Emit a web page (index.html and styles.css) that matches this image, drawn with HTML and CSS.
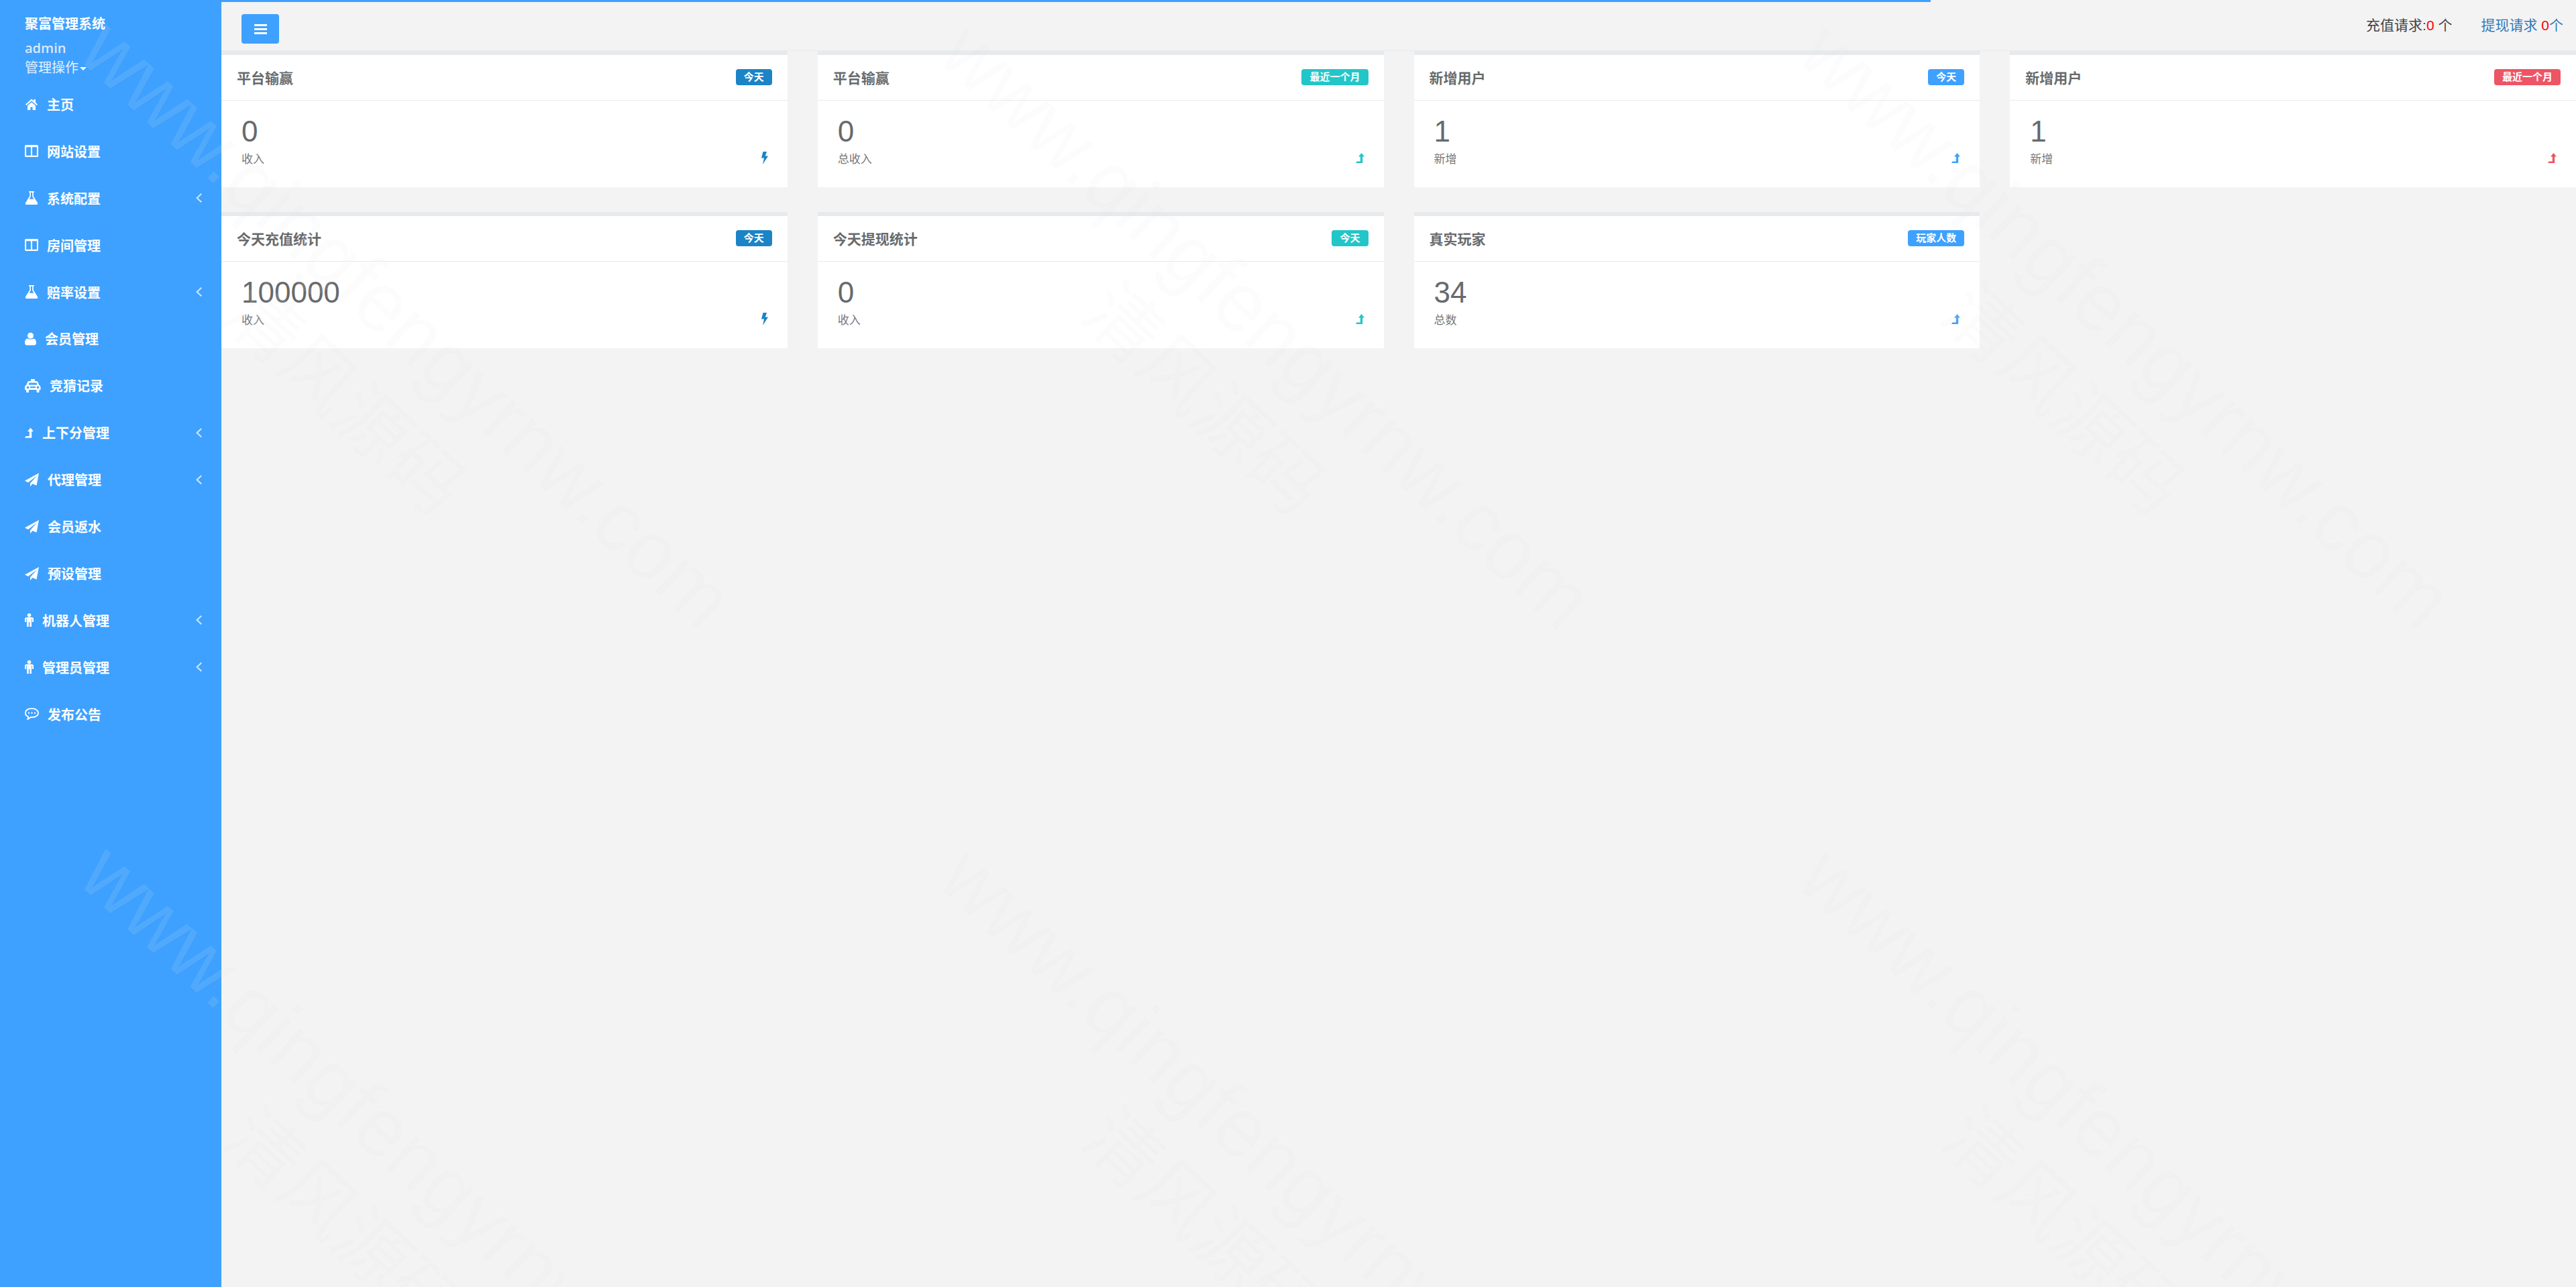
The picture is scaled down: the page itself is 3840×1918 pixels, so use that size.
FILE: index.html
```html
<!DOCTYPE html>
<html lang="zh-CN">
<head>
<meta charset="utf-8">
<title>聚富管理系统</title>
<link rel="stylesheet" href="styles.css">
</head>
<body>
<svg class="sprites" xmlns="http://www.w3.org/2000/svg">
  <symbol id="i-home" viewBox="0 0 20 18"><path d="M10 1.5 1 9.5l1.300 1.500L10 4.200 17.700 11 19 9.500 16 6.800V2h-2.700v2.400zM4 11.500 10 6.200l6 5.300V18h-4.400v-4.600H8.400V18H4z"/></symbol>
  <symbol id="i-columns" viewBox="0 0 19 17"><path fill-rule="evenodd" d="M1.500 0h16A1.500 1.500 0 0 1 19 1.500v14a1.500 1.500 0 0 1-1.500 1.500h-16A1.500 1.500 0 0 1 0 15.500v-14A1.500 1.500 0 0 1 1.500 0zM2 3v12h6.500V3zm8.500 0v12H17V3z"/></symbol>
  <symbol id="i-flask" viewBox="0 0 17 18"><path fill-rule="evenodd" d="M5 0h7v1.500h-1v5l5.600 9q.8 2-1.200 2.500H1.600Q-.4 17.500.4 15.500l5.600-9v-5H5zM7.500 1.500v5.500L5.500 10.500h6L9.500 7V1.500z"/></symbol>
  <symbol id="i-user" viewBox="0 0 16 18"><circle cx="8" cy="4.500" r="4.300"/><path d="M3.500 8.500Q8 11 12.500 8.500 16 9.500 16 14.500 16 18 13 18H3Q0 18 0 14.500 0 9.500 3.500 8.500z"/></symbol>
  <symbol id="i-taxi" viewBox="0 0 24 20"><path fill-rule="evenodd" d="M9 0h6v3h2.500q1.500 0 2 1.500l1.500 4q2.500 1 2.500 3.500v4h-2v2.500q0 1.500-1.500 1.500h-1q-1.500 0-1.500-1.500V16H6v2.500Q6 20 4.500 20h-1Q2 20 2 18.500V16H0v-4q0-2.500 2.500-3.500l1.500-4Q4.500 3 6 3h3zM6.500 5.500 5.500 8.500h13l-1-3zM4.500 10.500a1.800 1.800 0 1 0 .01 0zm15 0a1.800 1.800 0 1 0 .01 0zM8 11v2h8v-2z"/></symbol>
  <symbol id="i-level" viewBox="0 0 13 15"><path d="M8.500 0 13 5.500h-2.800V15H0l1.600-2.400h5.200V5.500H4z"/></symbol>
  <symbol id="i-plane" viewBox="0 0 21 20"><path d="M21 0 17.500 18.500 11.500 16 8 20v-4.800L18 4 5 14 0 11.500z"/></symbol>
  <symbol id="i-male" viewBox="0 0 13 20"><circle cx="6.500" cy="2.800" r="2.800"/><path d="M2.500 6h8Q13 6 13 8.500V13h-2.200v-5h-.8v12H7.200v-7H5.800v7H3V8h-.8v5H0V8.500Q0 6 2.500 6z"/></symbol>
  <symbol id="i-comment" viewBox="0 0 21 18"><path fill-rule="evenodd" d="M10.500 0C16.300 0 21 3.200 21 7.500S16.300 15 10.500 15h-1.600Q6.500 17.300 2.500 18 4 16.300 4.300 13.800 0 12 0 7.500 0 0 10.500 0zm0 1.700C5.500 1.700 1.800 4.200 1.800 7.500c0 2.500 2 4.200 4.400 5.200q0 1.400-.5 2.300 1.700-.8 2.700-2.200 1 .1 2.100.1c5 0 8.700-2.500 8.700-5.400s-3.700-5.800-8.700-5.800zM6 6.300a1.200 1.200 0 1 1-.01 0zm4.500 0a1.200 1.200 0 1 1-.01 0zm4.500 0a1.200 1.200 0 1 1-.01 0z"/></symbol>
  <symbol id="i-bolt" viewBox="0 0 11 19"><path d="M3.500 0H9L6.800 6.500H11L3 19l2-9.500H1z"/></symbol>
  <symbol id="i-angle" viewBox="0 0 9 14"><path d="M7.500 0 9 1.400 3.200 7 9 12.600 7.500 14 0 7z"/></symbol>
</svg>

<div class="page">
  <aside class="sidebar">
    <div class="profile">
      <div class="brand">聚富管理系统</div>
      <div class="account">admin</div>
      <div class="manage">管理操作<span class="caret"></span></div>
    </div>
    <nav class="nav">
      <a class="nav-item"><svg class="ni w19"><use href="#i-home"/></svg><span>主页</span></a>
      <a class="nav-item"><svg class="ni w19"><use href="#i-columns"/></svg><span>网站设置</span></a>
      <a class="nav-item"><svg class="ni w19"><use href="#i-flask"/></svg><span>系统配置</span><svg class="angle"><use href="#i-angle"/></svg></a>
      <a class="nav-item"><svg class="ni w19"><use href="#i-columns"/></svg><span>房间管理</span></a>
      <a class="nav-item"><svg class="ni w19"><use href="#i-flask"/></svg><span>赔率设置</span><svg class="angle"><use href="#i-angle"/></svg></a>
      <a class="nav-item"><svg class="ni w16"><use href="#i-user"/></svg><span>会员管理</span></a>
      <a class="nav-item"><svg class="ni w24"><use href="#i-taxi"/></svg><span>竞猜记录</span></a>
      <a class="nav-item"><svg class="ni w13"><use href="#i-level"/></svg><span>上下分管理</span><svg class="angle"><use href="#i-angle"/></svg></a>
      <a class="nav-item"><svg class="ni w21"><use href="#i-plane"/></svg><span>代理管理</span><svg class="angle"><use href="#i-angle"/></svg></a>
      <a class="nav-item"><svg class="ni w21"><use href="#i-plane"/></svg><span>会员返水</span></a>
      <a class="nav-item"><svg class="ni w21"><use href="#i-plane"/></svg><span>预设管理</span></a>
      <a class="nav-item"><svg class="ni w13"><use href="#i-male"/></svg><span>机器人管理</span><svg class="angle"><use href="#i-angle"/></svg></a>
      <a class="nav-item"><svg class="ni w13"><use href="#i-male"/></svg><span>管理员管理</span><svg class="angle"><use href="#i-angle"/></svg></a>
      <a class="nav-item"><svg class="ni w21"><use href="#i-comment"/></svg><span>发布公告</span></a>
    </nav>
  </aside>

  <main class="main">
    <div class="progress"></div>
    <header class="topbar">
      <button class="toggle" type="button"><span class="bars"><i></i><i></i><i></i></span></button>
      <div class="requests">
        <span class="req">充值请求:<b class="red">0</b> 个</span>
        <a class="req link">提现请求 <b class="red">0</b>个</a>
      </div>
    </header>

    <section class="grid">
      <article class="card">
        <div class="card-head"><h5>平台输赢</h5><span class="badge navy">今天</span></div>
        <div class="card-body"><div class="num">0</div><div class="foot"><small>收入</small><svg class="ci bolt c-navy"><use href="#i-bolt"/></svg></div></div>
      </article>
      <article class="card">
        <div class="card-head"><h5>平台输赢</h5><span class="badge teal">最近一个月</span></div>
        <div class="card-body"><div class="num">0</div><div class="foot"><small>总收入</small><svg class="ci c-teal"><use href="#i-level"/></svg></div></div>
      </article>
      <article class="card">
        <div class="card-head"><h5>新增用户</h5><span class="badge blue">今天</span></div>
        <div class="card-body"><div class="num">1</div><div class="foot"><small>新增</small><svg class="ci c-blue"><use href="#i-level"/></svg></div></div>
      </article>
      <article class="card">
        <div class="card-head"><h5>新增用户</h5><span class="badge red-bg">最近一个月</span></div>
        <div class="card-body"><div class="num">1</div><div class="foot"><small>新增</small><svg class="ci c-red"><use href="#i-level"/></svg></div></div>
      </article>
      <article class="card">
        <div class="card-head"><h5>今天充值统计</h5><span class="badge navy">今天</span></div>
        <div class="card-body"><div class="num">100000</div><div class="foot"><small>收入</small><svg class="ci bolt c-navy"><use href="#i-bolt"/></svg></div></div>
      </article>
      <article class="card">
        <div class="card-head"><h5>今天提现统计</h5><span class="badge teal">今天</span></div>
        <div class="card-body"><div class="num">0</div><div class="foot"><small>收入</small><svg class="ci c-teal"><use href="#i-level"/></svg></div></div>
      </article>
      <article class="card">
        <div class="card-head"><h5>真实玩家</h5><span class="badge blue">玩家人数</span></div>
        <div class="card-body"><div class="num">34</div><div class="foot"><small>总数</small><svg class="ci c-blue"><use href="#i-level"/></svg></div></div>
      </article>
    </section>
  </main>
</div>

<svg class="watermark" xmlns="http://www.w3.org/2000/svg" width="3840" height="1918" viewBox="0 0 3840 1918">
  <defs>
    <filter id="emboss" filterUnits="userSpaceOnUse" x="0" y="0" width="3840" height="1918" color-interpolation-filters="sRGB">
      <feOffset in="SourceAlpha" dx="0" dy="1.5" result="off"/>
      <feComposite in="off" in2="SourceAlpha" operator="out" result="edge"/>
      <feGaussianBlur in="edge" stdDeviation="0.4" result="soft"/>
      <feFlood flood-color="#000" flood-opacity="0.11"/>
      <feComposite in2="soft" operator="in" result="shade"/>
      <feMerge><feMergeNode in="SourceGraphic"/><feMergeNode in="shade"/></feMerge>
    </filter>
    <g id="wm-tile">
      <text class="wm-url" transform="rotate(42.6)" textLength="1265" lengthAdjust="spacingAndGlyphs">www.qingfengyrnw.com</text>
      <text class="wm-cn" transform="translate(214 386) rotate(43)">清风源码</text>
    </g>
  </defs>
  <g filter="url(#emboss)">
    <use href="#wm-tile" x="113" y="85"/>
    <use href="#wm-tile" x="1394" y="85"/>
    <use href="#wm-tile" x="2675" y="85"/>
    <use href="#wm-tile" x="113" y="1314"/>
    <use href="#wm-tile" x="1394" y="1314"/>
    <use href="#wm-tile" x="2675" y="1314"/>
  </g>
</svg>
</body>
</html>
```
FILE: styles.css
```css
* { box-sizing: border-box; }
html, body { margin: 0; padding: 0; height: 100%; overflow: hidden; }
body {
  position: relative;
  background: #f3f3f4;
  color: #676a6c;
  font-family: "Liberation Sans", "Noto Sans CJK SC", sans-serif;
  font-size: 20px;
}
.sprites { display: none; }
.page { display: flex; height: 1918px; }

/* sidebar */
.sidebar { flex: 0 0 330px; background: #3ea1ff; color: #fff; }
.profile { padding: 24px 0 5.5px 37px; }
.brand { font-size: 20px; line-height: 24px; font-weight: 700; color: #fff; }
.account { margin-top: 10px; font-family: "Open Sans", sans-serif; font-size: 20px; line-height: 28px; font-weight: 600; color: #dfe7f5; }
.manage { margin-top: 1px; font-size: 20px; line-height: 28px; color: #e4effc; }
.caret { display: inline-block; margin-left: 2px; vertical-align: middle; border-top: 5px solid #fff; border-left: 5px solid transparent; border-right: 5px solid transparent; }
.nav { display: flex; flex-direction: column; }
.nav-item { display: flex; align-items: center; height: 69.92px; padding-left: 37px; font-size: 20px; font-weight: 700; color: #fff; }
.ni { fill: #fff; height: 20px; margin-right: 13px; flex: none; }
.w13 { width: 13px; } .w16 { width: 17px; } .w19 { width: 20px; } .w21 { width: 21px; } .w24 { width: 24px; }
.angle { width: 9px; height: 14px; margin-left: auto; margin-right: 29px; fill: #c9e3ff; }

/* main */
.main { position: relative; flex: 1; min-width: 0; }
.progress { position: absolute; left: 0; top: 0; width: 72.6%; height: 3px; background: #3ea1ff; }
.topbar { display: flex; justify-content: space-between; align-items: flex-start; height: 76px; padding: 21px 19px 0 30px; border-bottom: 1px solid #e7eaec; }
.toggle { width: 56px; height: 44px; padding: 0; border: 0; border-radius: 4px; background: #3ea1ff; display: flex; align-items: center; justify-content: center; }
.bars { display: flex; flex-direction: column; gap: 3px; width: 19px; }
.bars i { display: block; height: 3px; background: #fff; }
.requests { display: flex; gap: 43px; margin-top: 2px; font-size: 21px; line-height: 30px; color: #444; }
.req b { font-weight: 400; }
.link { color: #337ab7; }
.red { color: #f00; }

.grid { display: grid; grid-template-columns: repeat(4, 1fr); column-gap: 45px; row-gap: 37px; }
.card { height: 203px; background: #fff; border-top: 6px solid #e7eaec; }
.card-head { display: flex; align-items: center; justify-content: space-between; height: 67.5px; padding: 0 23px; border-bottom: 1.5px solid #e7eaec; }
.card-head h5 { margin: -1px 0 0; font-size: 21px; font-weight: 700; color: #676a6c; }
.badge { display: block; height: 24px; padding: 0 12px; border-radius: 4px; color: #fff; font-size: 15px; line-height: 24px; font-weight: 700; }
.navy { background: #1c84c6; }
.teal { background: #23c6c8; }
.blue { background: #3ea1ff; }
.red-bg { background: #ed5565; }
.card-body { padding: 22px 29px 0 30px; }
.num { font-size: 44px; line-height: 47px; color: #676a6c; }
.foot { display: flex; align-items: center; justify-content: space-between; height: 33px; }
.foot small { font-size: 17px; color: #777; }
.ci { width: 13px; height: 15px; }
.bolt { width: 11px; height: 19px; }
.c-navy { fill: #1c84c6; } .c-teal { fill: #23c6c8; } .c-blue { fill: #3ea1ff; } .c-red { fill: #ed5565; }

/* watermark */
.watermark { position: absolute; left: 0; top: 0; pointer-events: none; }
.wm-url { font-family: "Liberation Sans", sans-serif; font-size: 125px; fill: #fff; fill-opacity: .11; }
.wm-cn { font-family: "Noto Sans CJK SC", sans-serif; font-size: 110px; fill: #fff; fill-opacity: .11; }
```
